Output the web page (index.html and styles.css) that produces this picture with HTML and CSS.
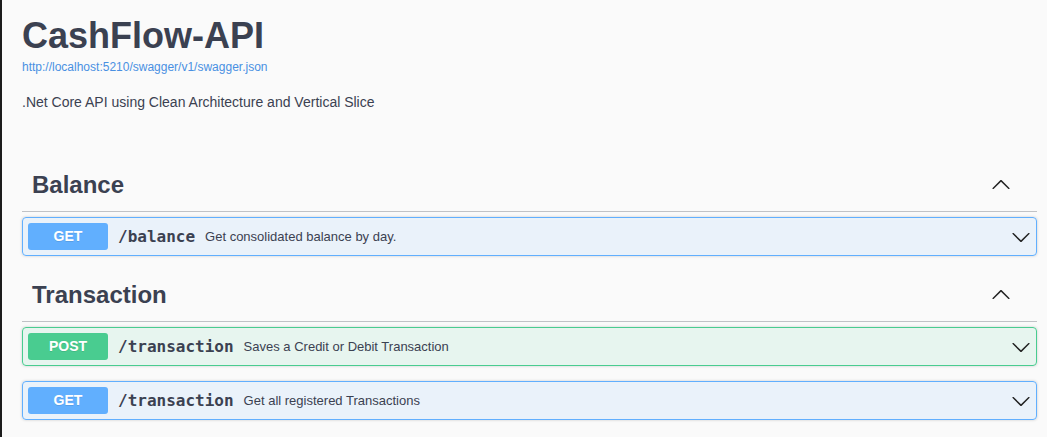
FILE: index.html
```html
<!DOCTYPE html>
<html lang="en">
<head>
<meta charset="utf-8">
<title>CashFlow-API</title>
<link rel="stylesheet" href="styles.css">
</head>
<body>
<div class="page">
  <div class="wrapper">
    <section class="info">
      <h2 class="title">CashFlow-API</h2>
      <a class="link" href="#">http://localhost:5210/swagger/v1/swagger.json</a>
      <p class="description">.Net Core API using Clean Architecture and Vertical Slice</p>
    </section>

    <section class="tag-section">
      <h3 class="tag">
        <span class="tag-name">Balance</span>
        <svg class="tag-arrow" width="20" height="20" viewBox="0 0 20 20"><path d="M17.418 14.908c.272.268.709.268.979 0s.271-.701 0-.969l-7.908-7.830c-.27-.268-.707-.268-.979 0l-7.908 7.830c-.27.268-.27.701 0 .969.271.268.709.268.979 0L10 7.767l7.418 7.141z"/></svg>
      </h3>
      <div class="opblock get">
        <div class="summary">
          <span class="method">GET</span>
          <span class="path">/balance</span>
          <span class="desc">Get consolidated balance by day.</span>
          <svg class="op-arrow" width="20" height="20" viewBox="0 0 20 20"><path d="M17.418 6.109c.272-.268.709-.268.979 0s.271.701 0 .969l-7.908 7.830c-.27.268-.707.268-.979 0l-7.908-7.830c-.27-.268-.27-.701 0-.969.271-.268.709-.268.979 0L10 13.250l7.418-7.141z"/></svg>
        </div>
      </div>
    </section>

    <section class="tag-section">
      <h3 class="tag">
        <span class="tag-name">Transaction</span>
        <svg class="tag-arrow" width="20" height="20" viewBox="0 0 20 20"><path d="M17.418 14.908c.272.268.709.268.979 0s.271-.701 0-.969l-7.908-7.830c-.27-.268-.707-.268-.979 0l-7.908 7.830c-.27.268-.27.701 0 .969.271.268.709.268.979 0L10 7.767l7.418 7.141z"/></svg>
      </h3>
      <div class="opblock post">
        <div class="summary">
          <span class="method">POST</span>
          <span class="path">/transaction</span>
          <span class="desc">Saves a Credit or Debit Transaction</span>
          <svg class="op-arrow" width="20" height="20" viewBox="0 0 20 20"><path d="M17.418 6.109c.272-.268.709-.268.979 0s.271.701 0 .969l-7.908 7.830c-.27.268-.707.268-.979 0l-7.908-7.830c-.27-.268-.27-.701 0-.969.271-.268.709-.268.979 0L10 13.250l7.418-7.141z"/></svg>
        </div>
      </div>
      <div class="opblock get">
        <div class="summary">
          <span class="method">GET</span>
          <span class="path">/transaction</span>
          <span class="desc">Get all registered Transactions</span>
          <svg class="op-arrow" width="20" height="20" viewBox="0 0 20 20"><path d="M17.418 6.109c.272-.268.709-.268.979 0s.271.701 0 .969l-7.908 7.830c-.27.268-.707.268-.979 0l-7.908-7.830c-.27-.268-.27-.701 0-.969.271-.268.709-.268.979 0L10 13.250l7.418-7.141z"/></svg>
        </div>
      </div>
    </section>
  </div>
</div>
</body>
</html>
```

FILE: styles.css
```css
html, body {
  margin: 0;
  padding: 0;
  background: #fafafa;
}

body {
  font-family: "Liberation Sans", Arial, sans-serif;
  color: #3b4151;
  overflow: hidden;
}

.page {
  min-height: 100vh;
  border-left: 2px solid #1c1c1c;
  box-sizing: border-box;
}

.wrapper {
  padding: 0 10px 0 20px;
}

.info {
  padding-top: 15px;
}

.title {
  margin: 0;
  font-size: 36px;
  line-height: 41px;
  font-weight: 700;
  color: #3b4151;
}

.link {
  display: block;
  margin-top: 4px;
  font-size: 12px;
  line-height: 14px;
  color: #4990e2;
  text-decoration: none;
}

.description {
  margin: 20px 0 0;
  font-size: 14px;
  line-height: 16px;
  color: #3b4151;
}

.info + .tag-section {
  margin-top: 53px;
}

.tag-section + .tag-section {
  padding-top: 2px;
}

.tag {
  display: flex;
  align-items: center;
  margin: 0 0 5px;
  padding: 8px 20px 12px 10px;
  border-bottom: 1px solid rgba(59, 65, 81, 0.3);
  font-size: 24px;
  line-height: 28px;
  font-weight: 700;
  color: #3b4151;
}

.tag-name {
  flex: 1;
}

.tag-arrow {
  margin: 0 6px 2px 0;
  fill: #222;
}

.opblock {
  margin: 0 0 15px;
  border: 1px solid;
  border-radius: 4px;
  box-shadow: 0 0 3px rgba(0, 0, 0, 0.19);
}

.opblock.get {
  background: rgba(97, 175, 254, 0.1);
  border-color: #61affe;
}

.opblock.post {
  background: rgba(73, 204, 144, 0.1);
  border-color: #49cc90;
}

.summary {
  display: flex;
  align-items: center;
  padding: 5px;
}

.method {
  min-width: 80px;
  padding: 6px 0;
  border-radius: 3px;
  font-size: 14px;
  line-height: 15px;
  font-weight: 700;
  text-align: center;
  color: #fff;
  text-shadow: 0 1px 0 rgba(0, 0, 0, 0.1);
}

.get .method {
  background: #61affe;
}

.post .method {
  background: #49cc90;
}

.path {
  padding: 0 10px;
  font-family: "DejaVu Sans Mono", "Liberation Mono", monospace;
  font-size: 16px;
  font-weight: 700;
  color: #3b4151;
}

.desc {
  flex: 1;
  font-size: 13px;
  color: #3b4151;
}

.op-arrow {
  fill: #222;
}
```
